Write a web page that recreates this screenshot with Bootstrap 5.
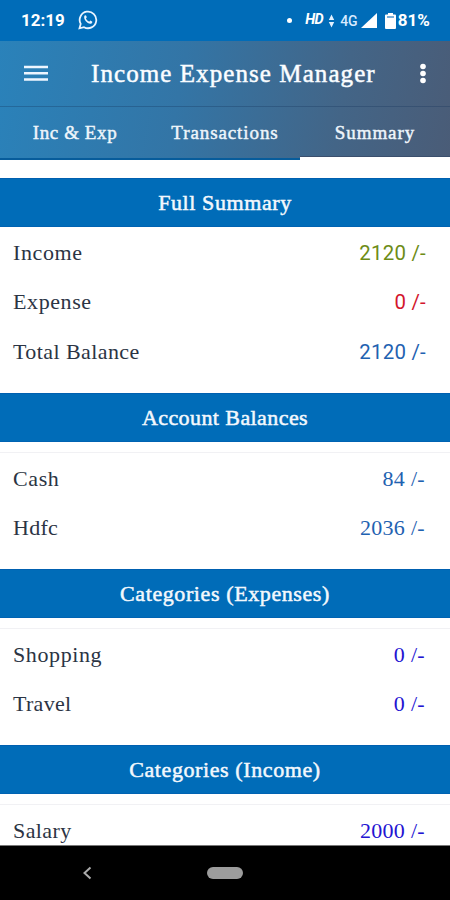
<!DOCTYPE html>
<html lang="en">
<head>
<meta charset="utf-8">
<meta name="viewport" content="width=device-width, initial-scale=1">
<title>Income Expense Manager</title>
<link href="https://cdn.jsdelivr.net/npm/bootstrap@5.3.0/dist/css/bootstrap.min.css" rel="stylesheet">
<style>
body{font-family:"Liberation Serif",serif;color:#2b3444;line-height:1.2}
.screen{height:900px}
.status-strip{height:41px;background:#006cb8;font:700 17px/1 Roboto,sans-serif;padding:0 20px 0 21px}
.wa{margin-left:13px;margin-top:-1px}
.dot-mark{width:5px;height:5px;margin-right:13px}
.hd{font-size:14.5px;letter-spacing:-.6px}
.arrows{margin-left:5px}
.net{font-weight:500;font-size:14px;margin-left:5px;color:#d8eaff}
.sig{margin-left:3px}
.bat{margin-left:8px}
.pct{margin-left:2px;letter-spacing:.1px}
.app-head{height:119px;background:linear-gradient(100deg,#2a82ba 0%,#3375a6 40%,#436587 75%,#4a5c77 100%)}
.title-bar{height:66px;border-bottom:1px solid rgba(20,50,90,.3);padding:0 20px 0 24px}
.title-text{margin-left:43px;font-size:25px;letter-spacing:1.08px;-webkit-text-stroke:.5px #f4faff}
.tab-item{font-size:19px;color:#eef5fb;height:53px;padding-top:2px;border-bottom:2px solid #075c9b;-webkit-text-stroke:.45px #eef5fb}
.tab-item.current{padding-top:3px;border-bottom:3px solid #fff;box-shadow:inset 0 -1px #3b4f6d}
.scroll-area{padding-top:18px}
.head-bar{height:49px;padding-top:2px;flex:none;background:#006cb8;color:#f3f8fd;font-size:22px;-webkit-text-stroke:.5px #f3f8fd;box-shadow:inset 0 1px #0060b0,inset 0 -1px #0063b2}
.group{height:176px;flex:none}
.group.first{height:215px}
.line-item{height:49px;flex:none;padding:0 25px 0 13px;font-size:22px}
.first .line-item{height:49.5px;padding-top:2px;padding-right:24px}
.rule{height:11px;margin-bottom:2px;border-bottom:1px solid #f1f1f4}
.sans{font-family:Roboto,sans-serif;font-size:20.4px;letter-spacing:.25px}
.green{color:#6d8c16}.red{color:#d3162c}.blue{color:#1f62b1}.violet{color:#2414d2}
.ls-3{letter-spacing:.3px}.ls-4{letter-spacing:.42px}.ls-6{letter-spacing:.6px}.ls-9{letter-spacing:.9px}
.nav-strip{height:55px;flex:none;background:#000;border-top:1px solid #777;padding-left:82px}
.home-pill{width:36px;height:12px;margin-left:115px;background:#9c9c9c}
</style>
<script src="https://cdn.jsdelivr.net/npm/bootstrap@5.3.0/dist/js/bootstrap.bundle.min.js"></script>
</head>
<body>
<div class="screen d-flex flex-column overflow-hidden bg-white">
  <div class="status-strip d-flex align-items-center text-white flex-shrink-0">
    <span class="clock">12:19</span>
    <svg class="wa" width="20" height="20" viewBox="0 0 20 20" fill="none" stroke="#eaf4ff" stroke-width="1.8"><path d="M1.500 18.300l1.200-4.400A8.300 8.300 0 1 1 6 17.200z"/><path d="M6.400 5.800c.7-.9 1.500-.8 1.800 0l.6 1.500-.9 1.200c.8 1.500 1.800 2.500 3.300 3.200l1.100-1.100 1.800.9c.5.500.1 1.500-.6 1.900-3.100 1.500-8.600-3.600-7.100-7.600z" fill="#eaf4ff" stroke="none"/></svg>
    <span class="dot-mark rounded-circle bg-white ms-auto"></span>
    <span class="hd fst-italic">HD</span>
    <svg class="arrows" width="7" height="14" viewBox="0 0 7 14" fill="#e3f1ff"><path d="M3.500 0.500L6.200 6H.8zM3.500 13.500L.8 8h5.400z"/></svg>
    <span class="net">4G</span>
    <svg class="sig" width="16" height="15" viewBox="0 0 16 15" fill="#fff"><path d="M16 0v15H0z"/></svg>
    <svg class="bat" width="11" height="16" viewBox="0 0 11 16" fill="#fff"><path d="M3 0h5v1.500h2Q11 1.500 11 2.500V15q0 1-1 1H1q-1 0-1-1V2.500Q0 1.500 1 1.500h2z"/><path d="M2 4h7" stroke="#4c94cc" stroke-width="1.500"/></svg>
    <span class="pct">81%</span>
  </div>
  <header class="app-head text-white flex-shrink-0">
    <div class="title-bar d-flex align-items-center">
      <svg width="24" height="18" viewBox="0 0 24 18" stroke="#eef6ff" stroke-width="2.500"><path d="M0 2h24M0 8.300h24M0 14.600h24"/></svg>
      <span class="title-text text-nowrap">Income Expense Manager</span>
      <svg class="ms-auto" width="14" height="22" viewBox="0 0 14 22" fill="#fff"><circle cx="7" cy="3.500" r="2.800"/><circle cx="7" cy="10.500" r="2.800"/><circle cx="7" cy="17.500" r="2.800"/></svg>
    </div>
    <div class="row g-0 text-center">
      <div class="col-4"><div class="tab-item d-flex align-items-center justify-content-center ls-6">Inc &amp; Exp</div></div>
      <div class="col-4"><div class="tab-item d-flex align-items-center justify-content-center ls-9">Transactions</div></div>
      <div class="col-4"><div class="tab-item current d-flex align-items-center justify-content-center ls-9">Summary</div></div>
    </div>
  </header>
  <main class="scroll-area d-flex flex-column flex-grow-1 overflow-hidden">
    <section class="group first">
      <div class="head-bar d-flex align-items-center justify-content-center ls-6">Full Summary</div>
      <div class="line-item d-flex align-items-center justify-content-between"><span class="ls-6">Income</span><span class="sans green">2120 /-</span></div>
      <div class="line-item d-flex align-items-center justify-content-between"><span class="ls-6">Expense</span><span class="sans red">0 /-</span></div>
      <div class="line-item d-flex align-items-center justify-content-between"><span class="ls-4">Total Balance</span><span class="sans blue">2120 /-</span></div>
    </section>
    <section class="group">
      <div class="head-bar d-flex align-items-center justify-content-center ls-4">Account Balances</div>
      <div class="rule"></div>
      <div class="line-item d-flex align-items-center justify-content-between"><span class="ls-6">Cash</span><span class="ls-3 blue">84 /-</span></div>
      <div class="line-item d-flex align-items-center justify-content-between"><span class="ls-3">Hdfc</span><span class="ls-3 blue">2036 /-</span></div>
    </section>
    <section class="group">
      <div class="head-bar d-flex align-items-center justify-content-center ls-6">Categories (Expenses)</div>
      <div class="rule"></div>
      <div class="line-item d-flex align-items-center justify-content-between"><span class="ls-6">Shopping</span><span class="ls-3 violet">0 /-</span></div>
      <div class="line-item d-flex align-items-center justify-content-between"><span class="ls-3">Travel</span><span class="ls-3 violet">0 /-</span></div>
    </section>
    <section class="group">
      <div class="head-bar d-flex align-items-center justify-content-center ls-6">Categories (Income)</div>
      <div class="rule"></div>
      <div class="line-item d-flex align-items-center justify-content-between"><span class="ls-4">Salary</span><span class="ls-3 violet">2000 /-</span></div>
    </section>
  </main>
  <footer class="nav-strip d-flex align-items-center">
    <svg width="10" height="14" viewBox="0 0 10 14" fill="none" stroke="#aaa" stroke-width="2"><path d="M8.500 1.500L2.500 7l6 5.500"/></svg>
    <div class="home-pill rounded-pill"></div>
  </footer>
</div>
</body>
</html>
